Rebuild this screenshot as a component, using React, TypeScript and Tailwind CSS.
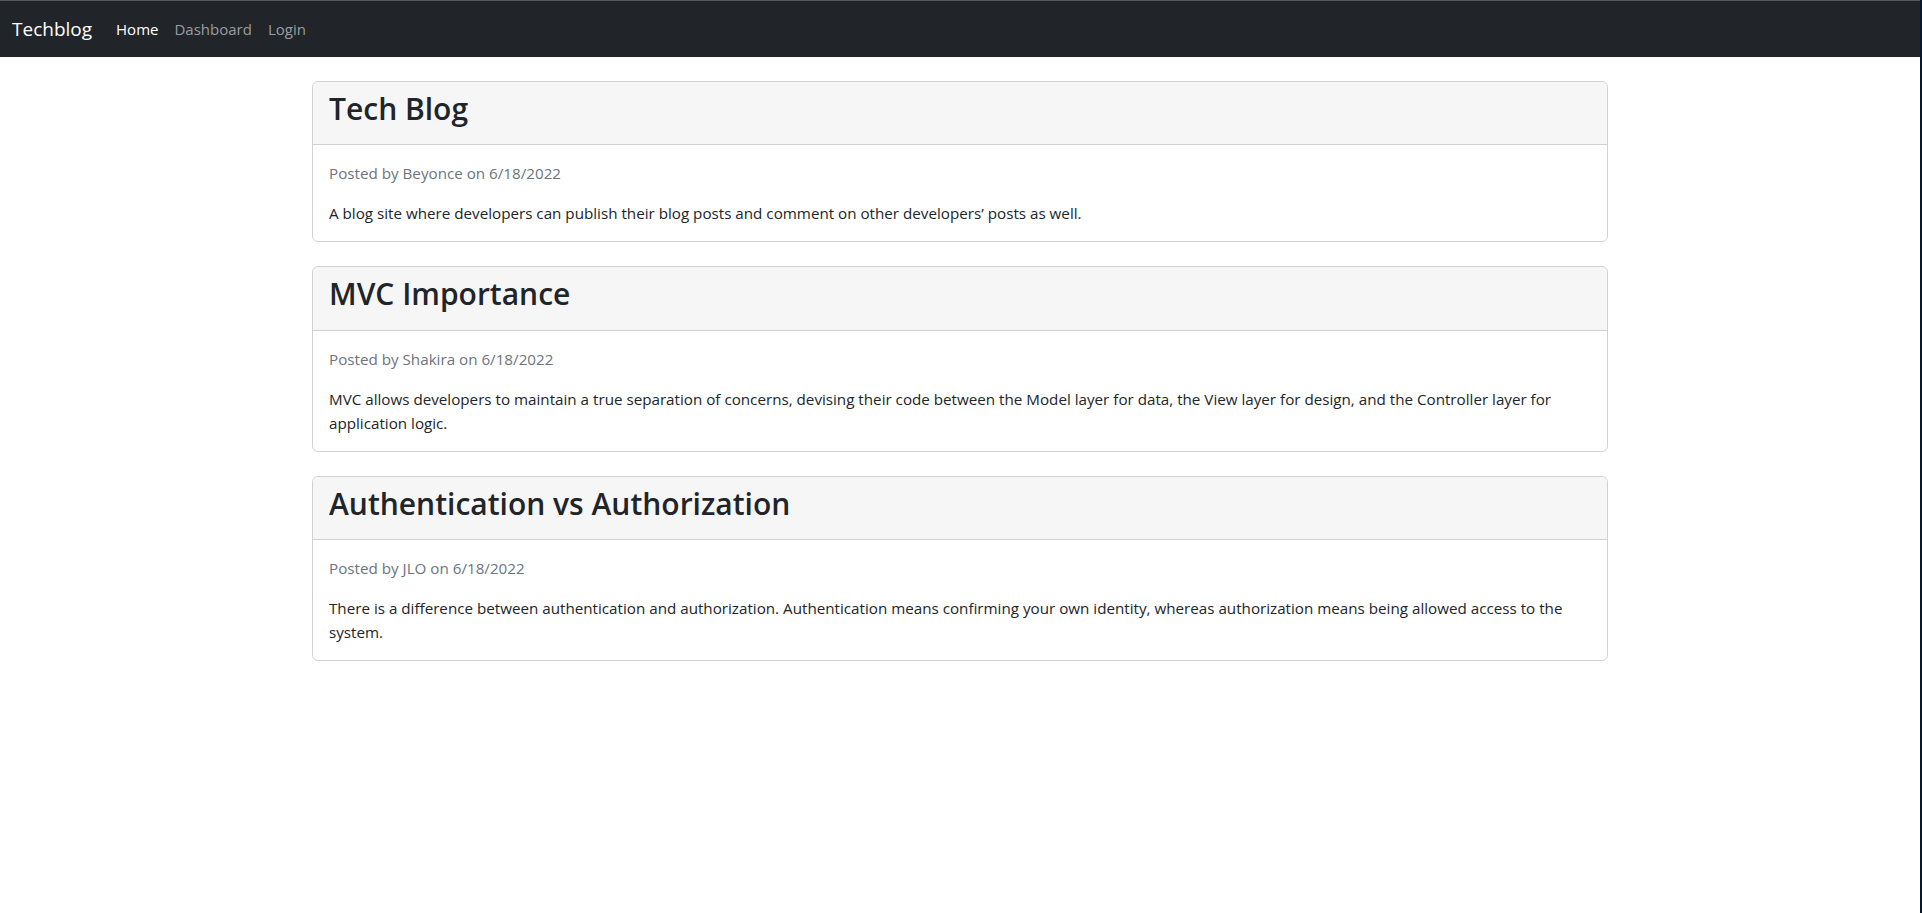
const posts = [
  {
    id: 1,
    title: 'Tech Blog',
    author: 'Beyonce',
    date: '6/18/2022',
    body: 'A blog site where developers can publish their blog posts and comment on other developers’ posts as well.',
  },
  {
    id: 2,
    title: 'MVC Importance',
    author: 'Shakira',
    date: '6/18/2022',
    body: 'MVC allows developers to maintain a true separation of concerns, devising their code between the Model layer for data, the View layer for design, and the Controller layer for application logic.',
  },
  {
    id: 3,
    title: 'Authentication vs Authorization',
    author: 'JLO',
    date: '6/18/2022',
    body: 'There is a difference between authentication and authorization. Authentication means confirming your own identity, whereas authorization means being allowed access to the system.',
  },
]

function Navbar() {
  return (
    <nav className="flex h-[57px] items-center border-t border-[#55585c] bg-[#212529] px-3">
      <a className="mr-4 text-[19px] leading-[30px] text-white">Techblog</a>
      <div className="flex items-center">
        <a className="px-2 text-[15px] leading-6 text-white">Home</a>
        <a className="px-2 text-[15px] leading-6 text-[#9a9c9f]">Dashboard</a>
        <a className="px-2 text-[15px] leading-6 text-[#9a9c9f]">Login</a>
      </div>
    </nav>
  )
}

export default function App() {
  return (
    <div className="flex min-h-screen bg-white font-['Open_Sans',sans-serif] text-[#212529]">
      <div className="flex flex-1 flex-col">
        <Navbar />
        <main className="mx-auto mt-6 flex w-[1320px] flex-col gap-6 px-3">
          {posts.map((post) => (
            <article
              key={post.id}
              className="flex flex-col rounded-[6px] border border-[#d2d2d2] bg-white"
            >
              <header className="rounded-t-[6px] border-b border-[#d2d2d2] bg-[#f6f6f6] px-4 py-2">
                <h2 className="mb-2 text-[30px] font-semibold leading-[38.4px]">
                  {post.title}
                </h2>
              </header>
              <div className="flex flex-col p-4">
                <p className="mb-4 text-[15.2px] leading-6 text-[#6c757d]">
                  Posted by {post.author} on {post.date}
                </p>
                <p className="text-[15.2px] leading-6">{post.body}</p>
              </div>
            </article>
          ))}
        </main>
      </div>
      <div className="w-[2px] bg-[#0b1628]" />
    </div>
  )
}
